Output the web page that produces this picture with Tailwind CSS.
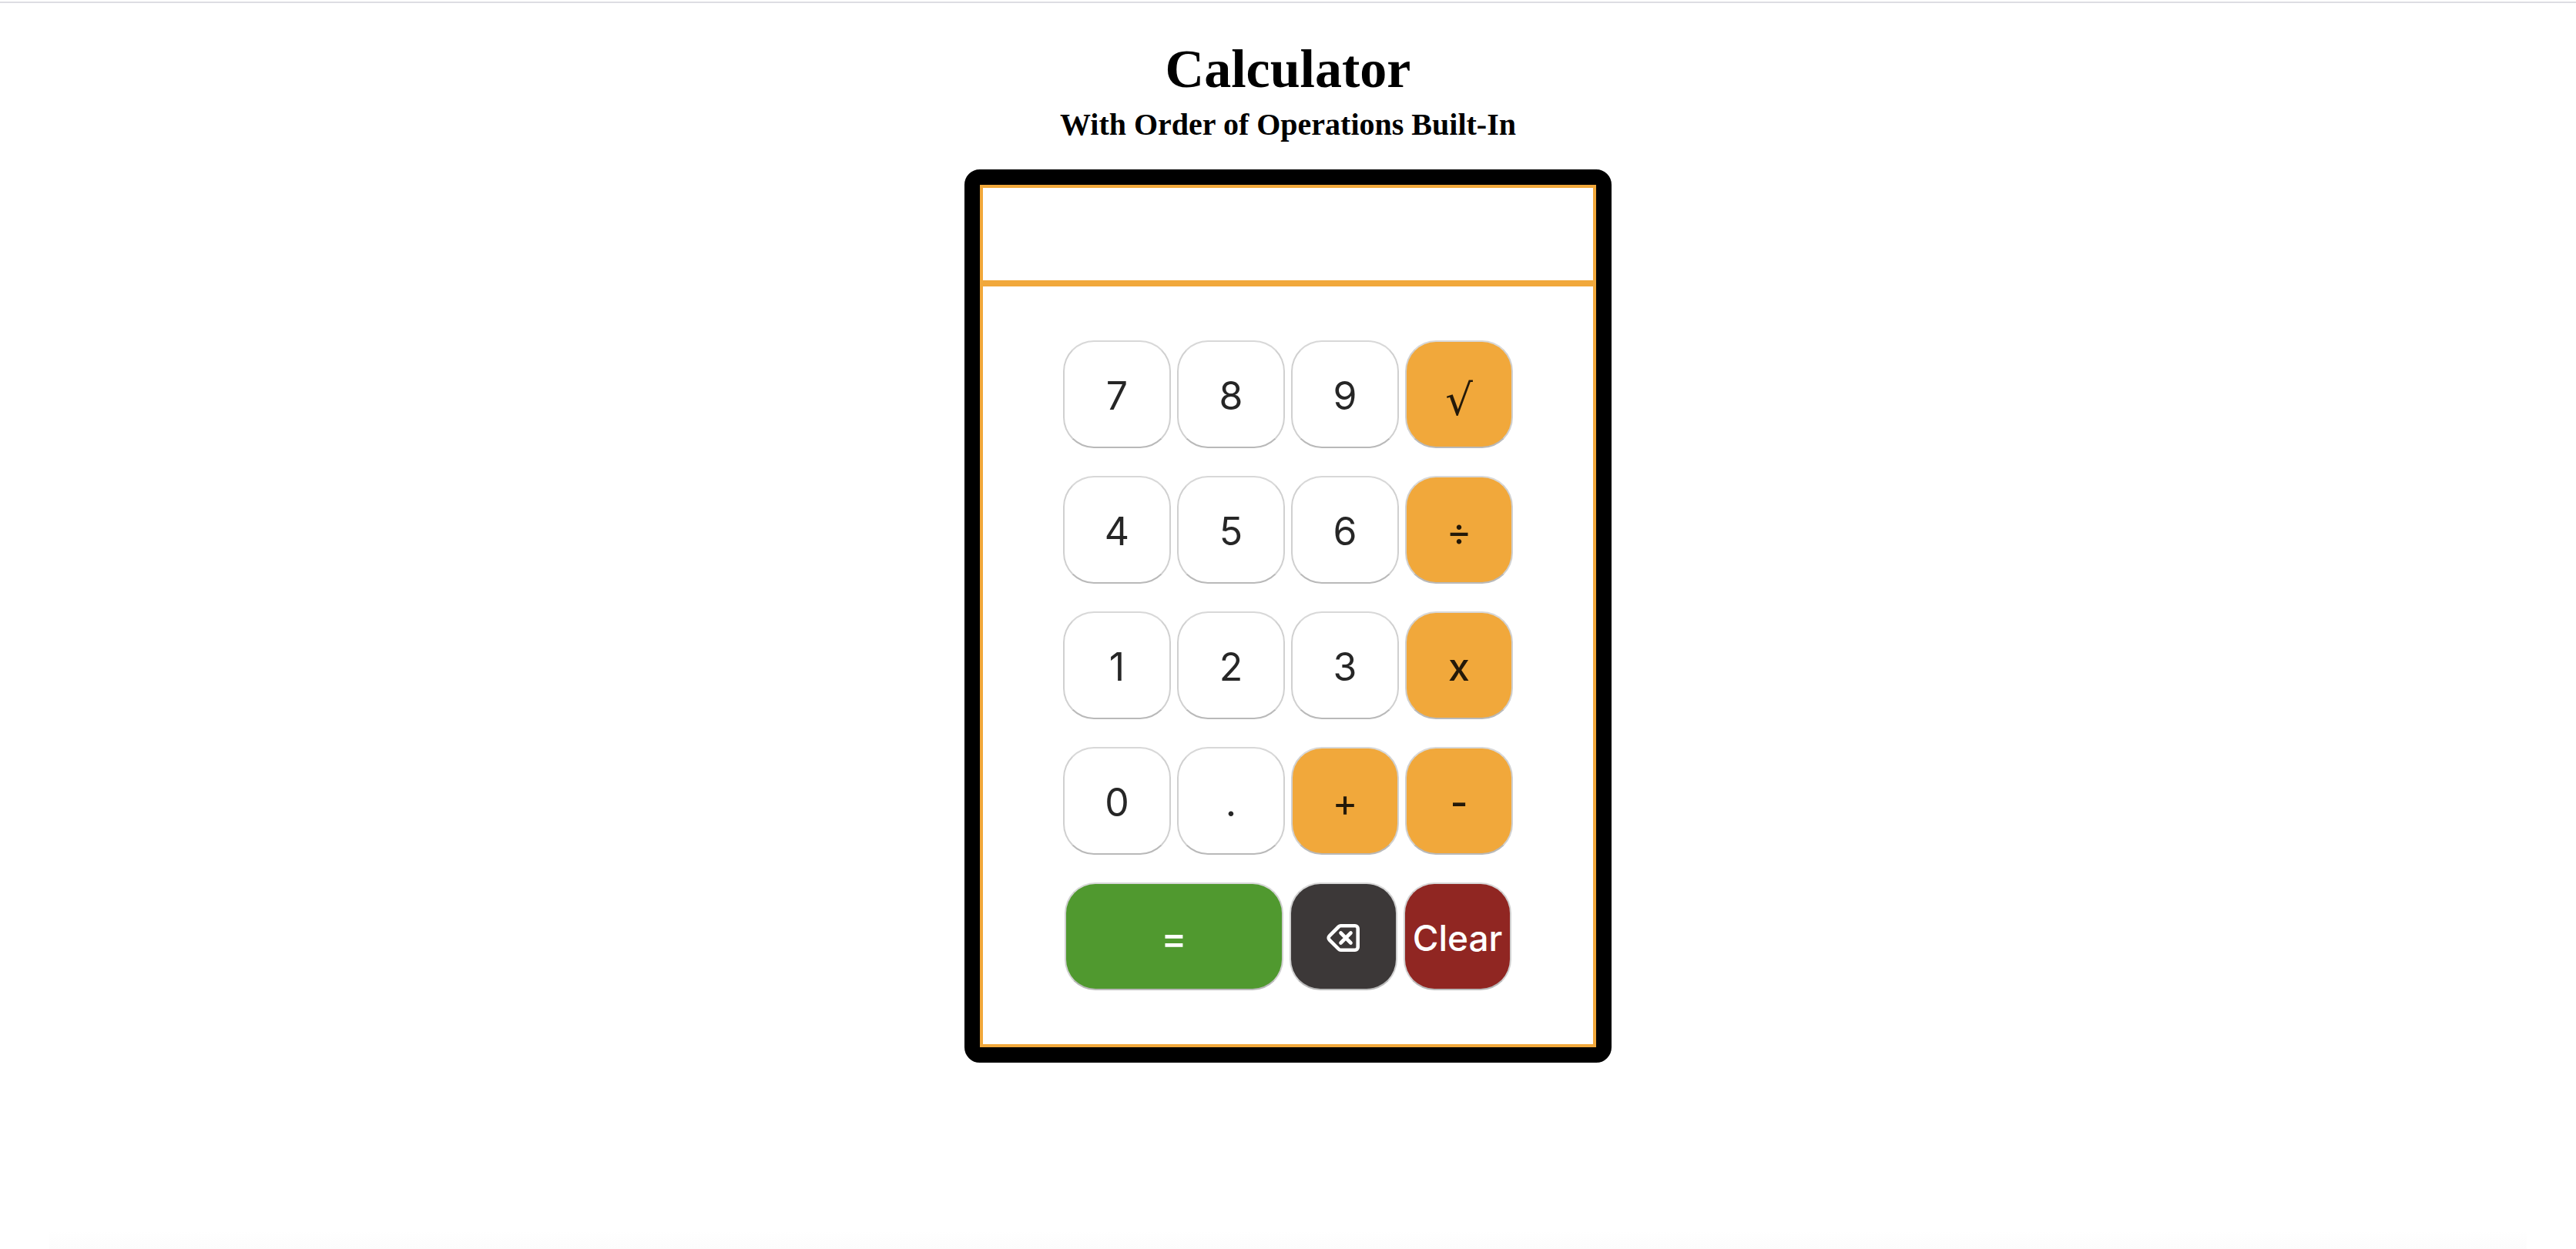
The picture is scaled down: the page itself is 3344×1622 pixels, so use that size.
<!DOCTYPE html>
<html lang="en">
<head>
<meta charset="utf-8">
<title>Calculator</title>
<script src="https://cdn.jsdelivr.net/npm/@tailwindcss/browser@4"></script>
</head>
<body class="flex min-h-screen flex-col bg-white border-t-2 border-white font-['Liberation_Serif',serif] text-black">
<div class="h-[2px] w-full bg-[#dddde3]"></div>
<header class="flex flex-col items-center pt-[46px] text-center font-bold">
  <h1 class="text-[70px] leading-[80px]">Calculator</h1>
  <h2 class="mt-2 text-[40px] leading-[48px]">With Order of Operations Built-In</h2>
</header>
<main class="mx-auto mt-[34px] w-full max-w-[840px] rounded-[20px] border-[20px] border-black bg-black">
  <div class="border-4 border-[#f1a83b] bg-white">
    <input aria-label="Display" type="text" readonly class="block h-32 w-full border-b-8 border-[#f1a83b] bg-white px-4 text-right text-5xl outline-none">
    <div class="flex flex-col items-center gap-9 py-[70px] font-['Inter',sans-serif] text-[50px] leading-[60px] text-[#262626]">
      <div class="flex gap-2">
        <button class="size-[140px] rounded-[40px] border-2 border-[#d0d0d0] border-t-[#d8d8d8] border-b-[#b9b9b9] bg-white pt-1">7</button>
        <button class="size-[140px] rounded-[40px] border-2 border-[#d0d0d0] border-t-[#d8d8d8] border-b-[#b9b9b9] bg-white pt-1">8</button>
        <button class="size-[140px] rounded-[40px] border-2 border-[#d0d0d0] border-t-[#d8d8d8] border-b-[#b9b9b9] bg-white pt-1">9</button>
        <button class="size-[140px] rounded-[40px] border-2 border-[#d0d0d0] border-t-[#d8d8d8] border-b-[#b9b9b9] bg-[#f1a83b] pt-4 font-['DejaVu_Sans',sans-serif] text-[56px] text-[#241909]">√</button>
      </div>
      <div class="flex gap-2">
        <button class="size-[140px] rounded-[40px] border-2 border-[#d0d0d0] border-t-[#d8d8d8] border-b-[#b9b9b9] bg-white pt-1">4</button>
        <button class="size-[140px] rounded-[40px] border-2 border-[#d0d0d0] border-t-[#d8d8d8] border-b-[#b9b9b9] bg-white pt-1">5</button>
        <button class="size-[140px] rounded-[40px] border-2 border-[#d0d0d0] border-t-[#d8d8d8] border-b-[#b9b9b9] bg-white pt-1">6</button>
        <button class="size-[140px] rounded-[40px] border-2 border-[#d0d0d0] border-t-[#d8d8d8] border-b-[#b9b9b9] bg-[#f1a83b] pt-1 text-[#241909]">÷</button>
      </div>
      <div class="flex gap-2">
        <button class="size-[140px] rounded-[40px] border-2 border-[#d0d0d0] border-t-[#d8d8d8] border-b-[#b9b9b9] bg-white pt-1">1</button>
        <button class="size-[140px] rounded-[40px] border-2 border-[#d0d0d0] border-t-[#d8d8d8] border-b-[#b9b9b9] bg-white pt-1">2</button>
        <button class="size-[140px] rounded-[40px] border-2 border-[#d0d0d0] border-t-[#d8d8d8] border-b-[#b9b9b9] bg-white pt-1">3</button>
        <button class="size-[140px] rounded-[40px] border-2 border-[#d0d0d0] border-t-[#d8d8d8] border-b-[#b9b9b9] bg-[#f1a83b] pt-1 font-medium text-[#241909]">x</button>
      </div>
      <div class="flex gap-2">
        <button class="size-[140px] rounded-[40px] border-2 border-[#d0d0d0] border-t-[#d8d8d8] border-b-[#b9b9b9] bg-white pt-1">0</button>
        <button class="size-[140px] rounded-[40px] border-2 border-[#d0d0d0] border-t-[#d8d8d8] border-b-[#b9b9b9] bg-white pt-1">.</button>
        <button class="size-[140px] rounded-[40px] border-2 border-[#d0d0d0] border-t-[#d8d8d8] border-b-[#b9b9b9] bg-[#f1a83b] pt-1 text-[#241909]">+</button>
        <button class="size-[140px] rounded-[40px] border-2 border-[#d0d0d0] border-t-[#d8d8d8] border-b-[#b9b9b9] bg-[#f1a83b] pt-1 font-medium text-[#241909]">-</button>
      </div>
      <div class="flex gap-2 text-white">
        <button class="h-[140px] w-[284px] rounded-[40px] border-2 border-[#d0d0d0] border-t-[#d8d8d8] border-b-[#b9b9b9] bg-[#50992f] pt-1 font-medium">=</button>
        <button aria-label="Backspace" class="flex size-[140px] items-center justify-center rounded-[40px] border-2 border-[#d0d0d0] border-t-[#d8d8d8] border-b-[#b9b9b9] bg-[#3c3838] pt-1">
          <svg class="h-9 w-11" viewBox="0 0 44 36" fill="none" stroke="currentColor" stroke-width="4.6" stroke-linecap="round" stroke-linejoin="round"><path d="M18.500 2.300H37a3.700 3.700 0 0 1 3.700 3.700v24a3.700 3.700 0 0 1-3.700 3.700H18.500a4 4 0 0 1-2.800-1.200L3.800 20.600a3.600 3.600 0 0 1 0-5.200L15.700 3.500a4 4 0 0 1 2.800-1.200ZM18.500 11.500l13 13m0-13l-13 13"/></svg>
        </button>
        <button class="flex size-[140px] items-center justify-center rounded-[40px] border-2 border-[#d0d0d0] border-t-[#d8d8d8] border-b-[#b9b9b9] bg-[#902622] pt-1 text-[46px] font-medium">Clear</button>
      </div>
    </div>
  </div>
</main>
<footer class="mx-16 mt-auto h-6 bg-linear-to-b from-white to-[#fcfcfc]"></footer>
</body>
</html>
